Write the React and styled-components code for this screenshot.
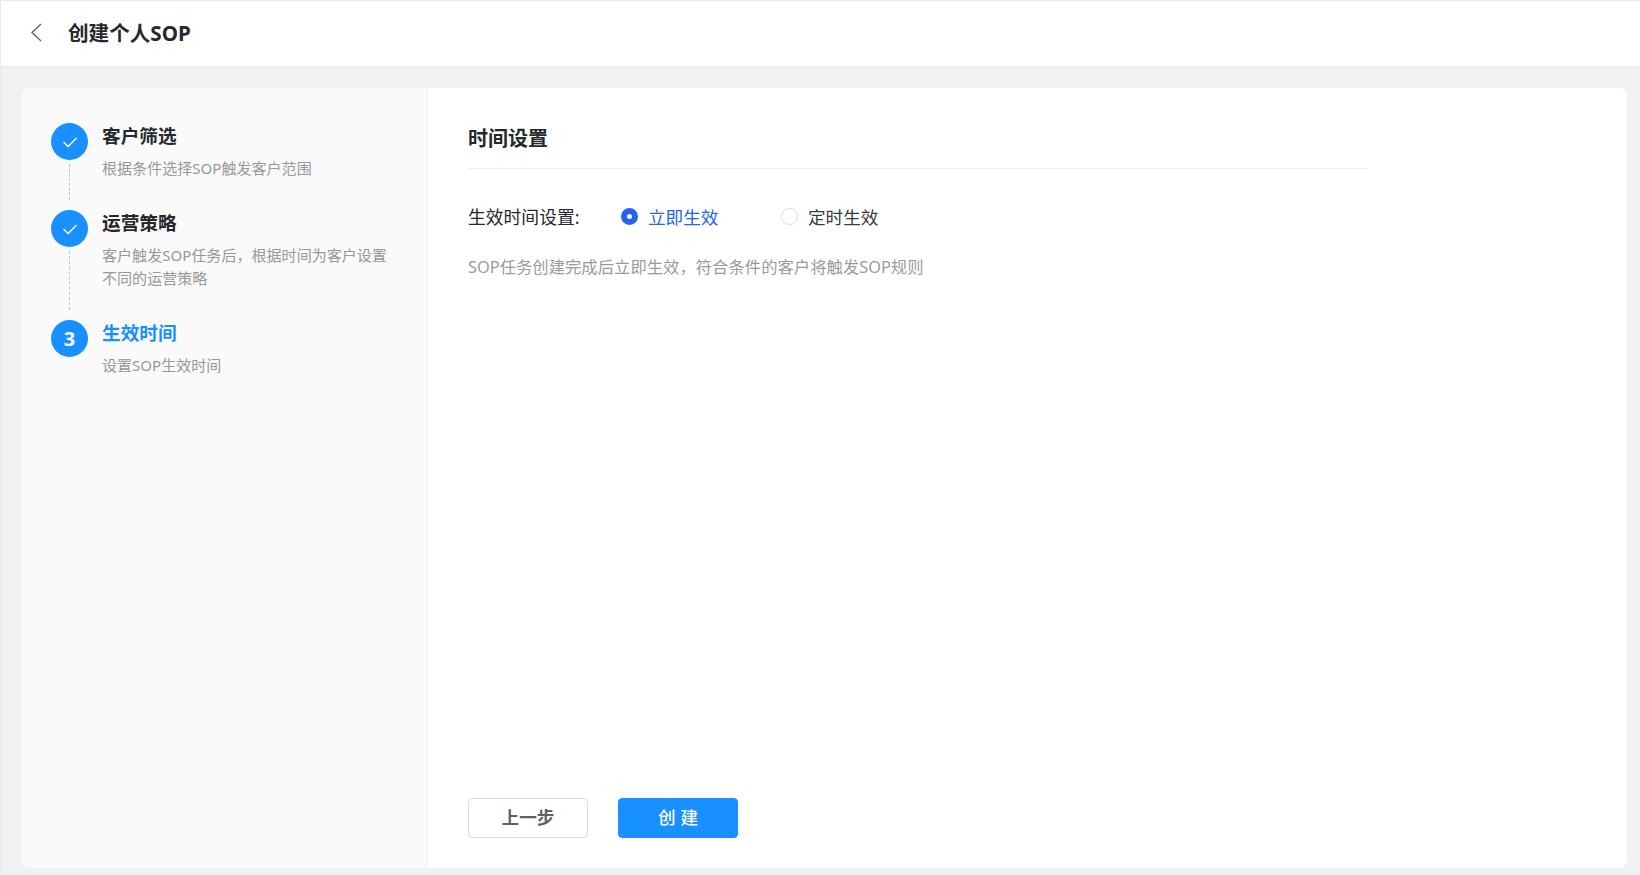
import React from "react";
import styled, { createGlobalStyle } from "styled-components";

const Global = createGlobalStyle`
  html, body { margin: 0; padding: 0; height: 100%; background: #f0f1f3; }
  body { font-family: "Noto Sans", "Noto Sans CJK SC", sans-serif; overflow: hidden; }
  #root { height: 875px; }
  * { box-sizing: border-box; }
`;

const Page = styled.div`
  height: 875px;
  display: flex;
  flex-direction: column;
  border-left: 1px solid #e9eaf0;
  border-top: 1px solid #e9eaf0;
`;

const Header = styled.header`
  flex: 0 0 66px;
  height: 66px;
  display: flex;
  align-items: center;
  padding: 0 0 2px 28px;
  background: #fff;
  border-bottom: 1px solid #e9eaf0;
`;

const BackButton = styled.span`
  display: flex;
  width: 39px;
  color: #66676b;
`;

const PageTitle = styled.h1`
  margin: 0;
  font-size: 20.6px;
  line-height: 30px;
  font-weight: 700;
  color: #26282c;
`;

const Card = styled.main`
  flex: 0 0 780px;
  margin: 21px 13px 0 21px;
  display: flex;
  background: #fff;
  border-radius: 8px;
  overflow: hidden;
`;

const Sidebar = styled.aside`
  flex: 0 0 406px;
  padding: 35px 30px 0 29px;
  background: #fafafb;
  border-right: 1px solid #eeeff3;
`;

const Step = styled.div`
  display: flex;
  gap: 14px;
  min-height: ${(p) => p.$height}px;
`;

const Rail = styled.div`
  flex: 0 0 37px;
  display: flex;
  flex-direction: column;
  align-items: center;
`;

const Circle = styled.div`
  flex: 0 0 37px;
  width: 37px;
  height: 37px;
  border-radius: 50%;
  background: #1890ff;
  color: #fff;
  display: flex;
  align-items: center;
  justify-content: center;
  font-size: 20px;
  font-weight: 700;
`;

const Connector = styled.div`
  flex: 1;
  margin: 4px 0 10px;
  border-left: 1px dashed #a3cdef;
`;

const StepBody = styled.div`
  flex: 1;
  margin-top: -1px;
`;

const StepTitle = styled.div`
  font-size: 18.7px;
  line-height: 28px;
  font-weight: 700;
  color: ${(p) => (p.$active ? "#1890ff" : "#26282c")};
`;

const StepDesc = styled.div`
  margin-top: 7px;
  font-size: 15.05px;
  line-height: 23px;
  color: #97989d;
`;

const Content = styled.section`
  flex: 1;
  display: flex;
  flex-direction: column;
  padding: 0 0 30px 40px;
`;

const SectionHead = styled.div`
  width: 900px;
  height: 81px;
  padding-top: 36px;
  border-bottom: 1px solid #eeeff4;
`;

const SectionTitle = styled.h2`
  margin: 0;
  font-size: 20px;
  line-height: 30px;
  font-weight: 700;
  color: #26282c;
`;

const FormRow = styled.div`
  display: flex;
  align-items: center;
  height: 26px;
  margin-top: 35px;
`;

const FieldLabel = styled.span`
  width: 153px;
  font-size: 17.8px;
  line-height: 26px;
  color: #26282c;
`;

const RadioOption = styled.label`
  display: flex;
  align-items: center;
  gap: 10px;
  width: 160px;
  font-size: 17.6px;
  line-height: 26px;
  color: ${(p) => (p.$checked ? "#2563eb" : "#3a3c40")};
`;

const RadioDot = styled.span`
  width: 17px;
  height: 17px;
  margin-top: -1px;
  border-radius: 50%;
  background: #fff;
  border: ${(p) => (p.$checked ? "6px solid #2563eb" : "1px solid #dcdde3")};
`;

const Hint = styled.p`
  margin: 24px 0 0;
  font-size: 16.35px;
  line-height: 26px;
  color: #9a9ba0;
`;

const Actions = styled.div`
  margin-top: auto;
  display: flex;
  gap: 30px;
`;

const Button = styled.button`
  width: 120px;
  height: 40px;
  padding: ${(p) => (p.$primary ? "0 0 4px 5px" : "0 0 4px")};
  border-radius: 4px;
  font-family: inherit;
  font-size: 17.6px;
  font-weight: ${(p) => (p.$primary ? 500 : 700)};
  border: 1px solid ${(p) => (p.$primary ? "#1890ff" : "#dcdde3")};
  background: ${(p) => (p.$primary ? "#1890ff" : "#fff")};
  color: ${(p) => (p.$primary ? "#fff" : "#616266")};
  letter-spacing: ${(p) => (p.$primary ? "5px" : "0")};
`;

const Check = () => (
  <svg width="18" height="18" viewBox="0 0 18 18" fill="none" stroke="#fff" strokeWidth="1.3">
    <path d="M2.5 9 L7.2 13.5 L15.5 5" />
  </svg>
);

const Chevron = () => (
  <svg width="14" height="20" viewBox="0 0 14 20" fill="none" stroke="currentColor" strokeWidth="1.4">
    <path d="M12 1 L3 9.5 L12 18" />
  </svg>
);

const steps = [
  { title: "客户筛选", desc: "根据条件选择SOP触发客户范围", height: 87, done: true },
  { title: "运营策略", desc: "客户触发SOP任务后，根据时间为客户设置不同的运营策略", height: 110, done: true },
  { title: "生效时间", desc: "设置SOP生效时间", height: 80, active: true },
];

export default function App() {
  return (
    <Page>
      <Global />
      <Header>
        <BackButton><Chevron /></BackButton>
        <PageTitle>创建个人SOP</PageTitle>
      </Header>
      <Card>
        <Sidebar>
          {steps.map((s, i) => (
            <Step key={s.title} $height={s.height}>
              <Rail>
                <Circle>{s.done ? <Check /> : i + 1}</Circle>
                {i < steps.length - 1 && <Connector />}
              </Rail>
              <StepBody>
                <StepTitle $active={s.active}>{s.title}</StepTitle>
                <StepDesc>{s.desc}</StepDesc>
              </StepBody>
            </Step>
          ))}
        </Sidebar>
        <Content>
          <SectionHead>
            <SectionTitle>时间设置</SectionTitle>
          </SectionHead>
          <FormRow>
            <FieldLabel>生效时间设置:</FieldLabel>
            <RadioOption $checked><RadioDot $checked />立即生效</RadioOption>
            <RadioOption><RadioDot />定时生效</RadioOption>
          </FormRow>
          <Hint>SOP任务创建完成后立即生效，符合条件的客户将触发SOP规则</Hint>
          <Actions>
            <Button>上一步</Button>
            <Button $primary>创建</Button>
          </Actions>
        </Content>
      </Card>
    </Page>
  );
}
